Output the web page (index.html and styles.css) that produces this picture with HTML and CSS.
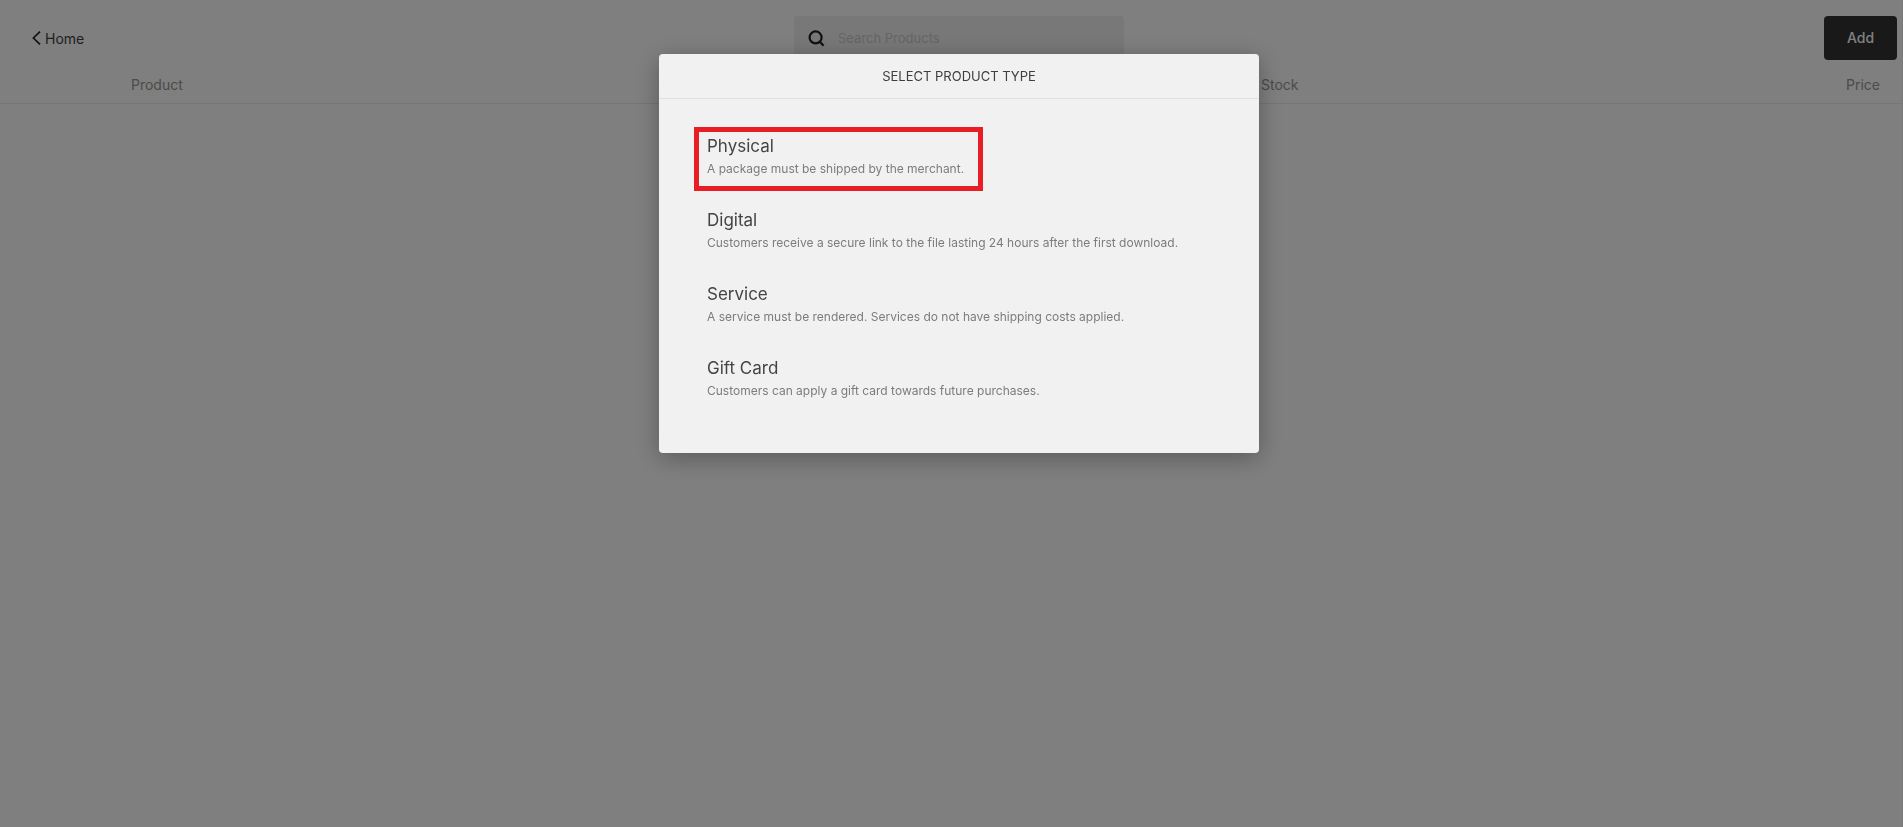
FILE: index.html
```html
<!DOCTYPE html>
<html lang="en">
<head>
    <meta charset="UTF-8">
    <meta name="viewport" content="width=device-width, initial-scale=1.0">
    <title>Products</title>
    <link rel="stylesheet" href="styles.css">
</head>
<body>
    <div class="page">
        <header class="toolbar">
            <a href="#" class="home-link">
                <svg class="chevron" viewBox="0 0 9 14" aria-hidden="true"><path d="M8 0.7 L1.4 7 L8 13.3"/></svg>
                Home
            </a>
            <div class="search">
                <svg class="search-icon" viewBox="0 0 17 17" aria-hidden="true"><circle cx="7.6" cy="7.4" r="6"/><path d="M11.6 11.6 L15.6 15.8"/></svg>
                <input type="search" placeholder="Search Products" aria-label="Search Products">
            </div>
            <button type="button" class="add-button">Add</button>
        </header>
        <table class="products">
            <thead>
                <tr>
                    <th class="product">Product</th>
                    <th class="stock">Stock</th>
                    <th class="price">Price</th>
                </tr>
            </thead>
        </table>
    </div>

    <div class="overlay">
        <div class="modal" role="dialog" aria-modal="true" aria-labelledby="modal-title">
            <h2 id="modal-title">SELECT PRODUCT TYPE</h2>
            <div class="options">
                <button type="button" class="option selected">
                    <span class="name">Physical</span>
                    <span class="description">A package must be shipped by the merchant.</span>
                </button>
                <button type="button" class="option">
                    <span class="name">Digital</span>
                    <span class="description">Customers receive a secure link to the file lasting 24 hours after the first download.</span>
                </button>
                <button type="button" class="option">
                    <span class="name">Service</span>
                    <span class="description">A service must be rendered. Services do not have shipping costs applied.</span>
                </button>
                <button type="button" class="option">
                    <span class="name">Gift Card</span>
                    <span class="description">Customers can apply a gift card towards future purchases.</span>
                </button>
            </div>
        </div>
    </div>
</body>
</html>
```
FILE: styles.css
```css
* {
    box-sizing: border-box;
}
body {
    margin: 0;
    font-family: Inter, "Open Sans", sans-serif;
    font-size: 14px;
    background-color: #fff;
}
button, input {
    font-family: inherit;
    font-size: inherit;
}
.page {
    min-height: 100vh;
    border-right: 1px solid #eee;
}
.toolbar {
    display: grid;
    grid-template-columns: 1fr 330px 1fr;
    align-items: center;
    padding: 16px 5px 0 21px;
}
.home-link {
    display: flex;
    align-items: center;
    justify-self: start;
    gap: 4px;
    padding-left: 11px;
    color: #3e3e3e;
    text-decoration: none;
}
.chevron {
    width: 9px;
    height: 14px;
    fill: none;
    stroke: #222;
    stroke-width: 1.7;
}
.search {
    display: flex;
    align-items: center;
    gap: 13px;
    height: 44px;
    padding: 0 14px;
    background-color: #f0f0f0;
    border-radius: 4px;
}
.search-icon {
    width: 17px;
    height: 17px;
    fill: none;
    stroke: #222;
    stroke-width: 2.2;
}
.search input {
    flex: 1;
    padding: 0;
    border: none;
    outline: none;
    background: none;
    font-size: 13px;
}
.search input::placeholder {
    color: #cbcbcb;
}
.add-button {
    justify-self: end;
    width: 73px;
    height: 44px;
    padding: 0 0 2px;
    border: none;
    border-radius: 4px;
    background-color: #333;
    color: #fff;
    font-weight: 500;
    cursor: pointer;
}
.products {
    width: 100%;
    border-collapse: collapse;
    table-layout: fixed;
}
.products th {
    height: 43px;
    padding: 6px 0 0;
    border-bottom: 1px solid #ececec;
    color: #979797;
    font-weight: 400;
    text-align: left;
}
.products .product {
    width: 66.3%;
    padding-left: 131px;
}
.products .price {
    padding-right: 22px;
    text-align: right;
}
.overlay {
    position: fixed;
    inset: 0;
    display: flex;
    align-items: flex-start;
    justify-content: center;
    padding: 54px 0 0 15px;
    background-color: rgba(0,0,0,0.5);
}
.modal {
    width: 100%;
    max-width: 600px;
    background-color: #f1f1f1;
    border-radius: 4px;
    box-shadow: 0 5px 25px rgba(0,0,0,0.3);
}
.modal h2 {
    margin: 0;
    padding: 12px;
    border-bottom: 1px solid #e0e0e0;
    color: #3e3e3e;
    font-size: 13px;
    font-weight: 400;
    line-height: 20px;
    text-align: center;
}
.options {
    display: flex;
    flex-direction: column;
    align-items: flex-start;
    gap: 10px;
    padding: 28px 35px 40px;
}
.option {
    min-width: 289px;
    padding: 2px 8px 6px;
    border: 5px solid transparent;
    background: none;
    text-align: left;
    cursor: pointer;
}
.option.selected {
    border-color: #e81e25;
}
.option .name {
    display: block;
    color: #444;
    font-size: 17px;
    line-height: 24px;
}
.option .description {
    display: block;
    color: #7c7c7c;
    font-size: 12px;
    line-height: 22px;
}
```
